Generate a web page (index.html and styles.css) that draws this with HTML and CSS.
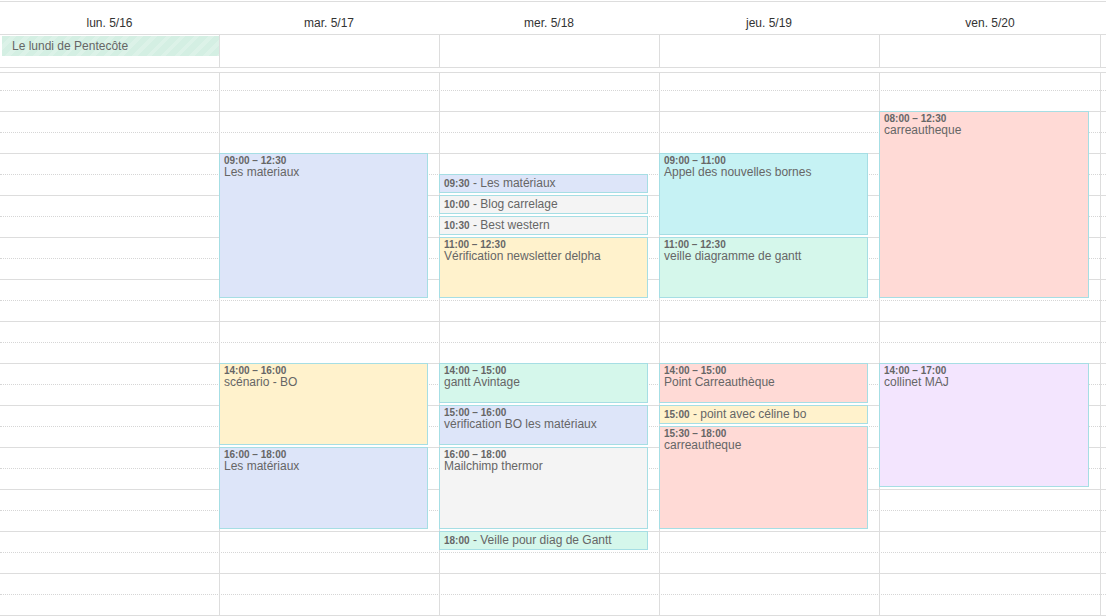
FILE: index.html
```html
<!DOCTYPE html>
<html lang="fr">
<head>
<meta charset="utf-8">
<title>Semaine</title>
<link rel="stylesheet" href="styles.css">
</head>
<body>
<div class="cal">
  <div class="row head">
    <div class="hcell">lun. 5/16</div>
    <div class="hcell">mar. 5/17</div>
    <div class="hcell">mer. 5/18</div>
    <div class="hcell">jeu. 5/19</div>
    <div class="hcell">ven. 5/20</div>
    <div class="hcell"></div>
  </div>
  <div class="row allday">
    <div class="acell"><div class="adev">Le lundi de Pentecôte</div></div>
    <div class="acell bl"></div>
    <div class="acell bl"></div>
    <div class="acell bl"></div>
    <div class="acell bl br"></div>
    <div class="acell"></div>
  </div>
  <div class="divider"></div>
  <div class="body">
    <div class="slots">
      <div class="slot first dot"></div>
      <div class="slot"></div><div class="slot dot"></div>
      <div class="slot"></div><div class="slot dot"></div>
      <div class="slot"></div><div class="slot dot"></div>
      <div class="slot"></div><div class="slot dot"></div>
      <div class="slot"></div><div class="slot dot"></div>
      <div class="slot"></div><div class="slot dot"></div>
      <div class="slot"></div><div class="slot dot"></div>
      <div class="slot"></div><div class="slot dot"></div>
      <div class="slot"></div><div class="slot dot"></div>
      <div class="slot"></div><div class="slot dot"></div>
      <div class="slot"></div><div class="slot dot"></div>
      <div class="slot"></div><div class="slot dot"></div>
      <div class="slot"></div>
    </div>
    <div class="row cols">
      <div class="col"></div>
      <div class="col bl">
        <div class="ev blue" style="top:80px;height:145px"><div class="t">09:00 – 12:30</div><div class="n">Les materiaux</div></div>
        <div class="ev yellow" style="top:290px;height:82px"><div class="t">14:00 – 16:00</div><div class="n">scénario - BO</div></div>
        <div class="ev blue" style="top:374px;height:82px"><div class="t">16:00 – 18:00</div><div class="n">Les matériaux</div></div>
      </div>
      <div class="col bl">
        <div class="ev short blue" style="top:101px;height:19px"><span class="t">09:30</span> - Les matériaux</div>
        <div class="ev short gray" style="top:122px;height:19px"><span class="t">10:00</span> - Blog carrelage</div>
        <div class="ev short gray" style="top:143px;height:19px"><span class="t">10:30</span> - Best western</div>
        <div class="ev yellow" style="top:164px;height:61px"><div class="t">11:00 – 12:30</div><div class="n">Vérification newsletter delpha</div></div>
        <div class="ev mint" style="top:290px;height:40px"><div class="t">14:00 – 15:00</div><div class="n">gantt Avintage</div></div>
        <div class="ev blue" style="top:332px;height:40px"><div class="t">15:00 – 16:00</div><div class="n">vérification BO les matériaux</div></div>
        <div class="ev gray" style="top:374px;height:82px"><div class="t">16:00 – 18:00</div><div class="n">Mailchimp thermor</div></div>
        <div class="ev short mint" style="top:458px;height:19px"><span class="t">18:00</span> - Veille pour diag de Gantt</div>
      </div>
      <div class="col bl">
        <div class="ev cyan" style="top:80px;height:82px"><div class="t">09:00 – 11:00</div><div class="n">Appel des nouvelles bornes</div></div>
        <div class="ev mint" style="top:164px;height:61px"><div class="t">11:00 – 12:30</div><div class="n">veille diagramme de gantt</div></div>
        <div class="ev pink" style="top:290px;height:40px"><div class="t">14:00 – 15:00</div><div class="n">Point Carreauthèque</div></div>
        <div class="ev short yellow" style="top:332px;height:19px"><span class="t">15:00</span> - point avec céline bo</div>
        <div class="ev pink" style="top:353px;height:103px"><div class="t">15:30 – 18:00</div><div class="n">carreautheque</div></div>
      </div>
      <div class="col bl br">
        <div class="ev pink" style="top:38px;height:187px"><div class="t">08:00 – 12:30</div><div class="n">carreautheque</div></div>
        <div class="ev lav" style="top:290px;height:124px"><div class="t">14:00 – 17:00</div><div class="n">collinet MAJ</div></div>
      </div>
      <div class="col"></div>
    </div>
  </div>
</div>
</body>
</html>
```

FILE: styles.css
```css
html, body {
  margin: 0;
  padding: 0;
  background: #fff;
}
body {
  font-family: "Liberation Sans", Arial, sans-serif;
  font-size: 12px;
  color: #333;
  width: 1106px;
  height: 616px;
  overflow: hidden;
}
.cal {
  width: 1106px;
  padding-top: 1px;
}
.row {
  display: grid;
  grid-template-columns: 219px 220px 220px 220px 222px 1fr;
}
.head {
  border-top: 1px solid #ddd;
  border-bottom: 1px solid #ddd;
  height: 32px;
}
.hcell {
  text-align: center;
  line-height: 14px;
  padding-top: 14px;
  color: #333;
}
.allday {
  border-bottom: 1px solid #ddd;
  height: 32px;
}
.acell {
  box-sizing: border-box;
  padding-top: 1px;
}
.bl { border-left: 1px solid #ddd; }
.br { border-right: 1px solid #ddd; }
.adev {
  margin-left: 2px;
  height: 20px;
  line-height: 20px;
  padding-left: 10px;
  color: #666;
  background-color: #d4efe3;
  background-image: repeating-linear-gradient(135deg, #d4efe3 0, #d4efe3 6px, #dcf2e8 6px, #dcf2e8 10px);
}
.divider {
  height: 4px;
}
.body {
  border-top: 1px solid #ddd;
  height: 543px;
  overflow: hidden;
  display: grid;
}
.slots, .cols {
  grid-area: 1 / 1;
}
.slot {
  box-sizing: border-box;
  height: 21px;
  border-bottom: 1px solid #ddd;
}
.slot.dot {
  border-bottom: 1px dotted #d6d6d6;
}
.slot.first {
  height: 18px;
}
.col {
  position: relative;
  box-sizing: border-box;
  height: 543px;
}
.ev {
  position: absolute;
  left: -1px;
  width: calc(100% - 10px);
  box-sizing: border-box;
  border: 1px solid #a6dee4;
  padding: 1px 4px 0;
  color: #666;
  overflow: hidden;
}
.ev .t {
  font-weight: bold;
  font-size: 10px;
  line-height: 11px;
}
.ev .n {
  font-size: 12px;
  line-height: 12px;
}
.ev.short {
  padding-top: 0;
  line-height: 16px;
  font-size: 12px;
  white-space: nowrap;
}
.ev.short .t {
  line-height: 16px;
}
.blue { background: #dde5f9; }
.yellow { background: #fff2cc; }
.mint { background: #d5f7eb; }
.cyan { background: #c6f2f4; }
.pink { background: #ffdad6; }
.gray { background: #f4f4f4; }
.lav { background: #f3e5fe; }
```
